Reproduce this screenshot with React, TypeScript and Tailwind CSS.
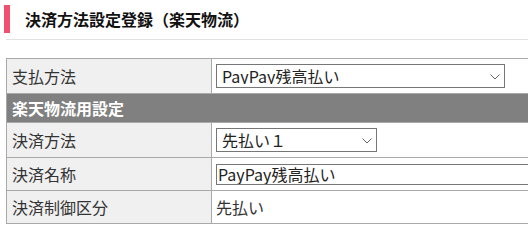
const font = "font-['Meiryo','Noto_Sans_CJK_JP','Noto_Sans',sans-serif]";

const Chevron = () => (
  <svg
    className="absolute right-[5px] top-[10px] w-[10px] h-[6px] pointer-events-none"
    viewBox="0 0 10 6"
    fill="none"
  >
    <polyline points="0.5,0.5 5,5 9.5,0.5" stroke="#666" strokeWidth="1" />
  </svg>
);

const Select = ({ value, width }: { value: string; width: string }) => (
  <div className={`relative ${width} h-[24px]`}>
    <select
      defaultValue={value}
      className={`appearance-none w-full h-full border border-[#767676] bg-white pl-[5px] pr-[24px] text-[16px] leading-none text-[#222] ${font}`}
    >
      <option>{value}</option>
    </select>
    <Chevron />
  </div>
);

const App = () => {
  return (
    <div className={`w-[528px] h-[230px] overflow-hidden bg-white ${font}`}>
      {/* heading */}
      <div className="flex items-center pt-[5px] pl-[4px]">
        <div className="w-[6px] h-[28px] bg-[#f0506e]" />
        <h1 className="ml-[15px] text-[16px] font-bold text-[#111] leading-none">
          決済方法設定登録（楽天物流）
        </h1>
      </div>
      <div className="ml-[6px] mt-[6px] border-t border-[#e2e2e2]" />

      <table className="mt-[18px] ml-[6px] w-[600px] table-fixed border-collapse text-[16px] text-[#333]">
        <colgroup>
          <col className="w-[205px]" />
          <col />
        </colgroup>
        <tbody>
          <tr className="h-[35px]">
            <td className="bg-[#f0f0f0] border border-[#a9a9a9] px-[5px]">支払方法</td>
            <td className="border border-[#a9a9a9] border-l-[#d0d0d0] px-[4px]">
              <Select value="PayPay残高払い" width="w-[289px]" />
            </td>
          </tr>
          <tr className="h-[29px]">
            <td colSpan={2} className="bg-[#808080] border border-[#a9a9a9] px-[5px] text-white font-bold">
              楽天物流用設定
            </td>
          </tr>
          <tr className="h-[35px]">
            <td className="bg-[#f0f0f0] border border-[#a9a9a9] px-[5px]">決済方法</td>
            <td className="border border-[#a9a9a9] border-l-[#d0d0d0] px-[4px]">
              <Select value="先払い１" width="w-[161px]" />
            </td>
          </tr>
          <tr className="h-[33px]">
            <td className="bg-[#f0f0f0] border border-[#a9a9a9] px-[5px]">決済名称</td>
            <td className="border border-[#a9a9a9] border-l-[#d0d0d0] px-[4px]">
              <input
                defaultValue="PayPay残高払い"
                className={`w-[400px] h-[21px] border border-[#767676] px-[1px] text-[16px] leading-none text-[#222] ${font}`}
              />
            </td>
          </tr>
          <tr className="h-[33px]">
            <td className="bg-[#f0f0f0] border border-[#a9a9a9] px-[5px]">決済制御区分</td>
            <td className="border border-[#a9a9a9] border-l-[#d0d0d0] px-[4px]">先払い</td>
          </tr>
        </tbody>
      </table>
    </div>
  );
};

export default App;
